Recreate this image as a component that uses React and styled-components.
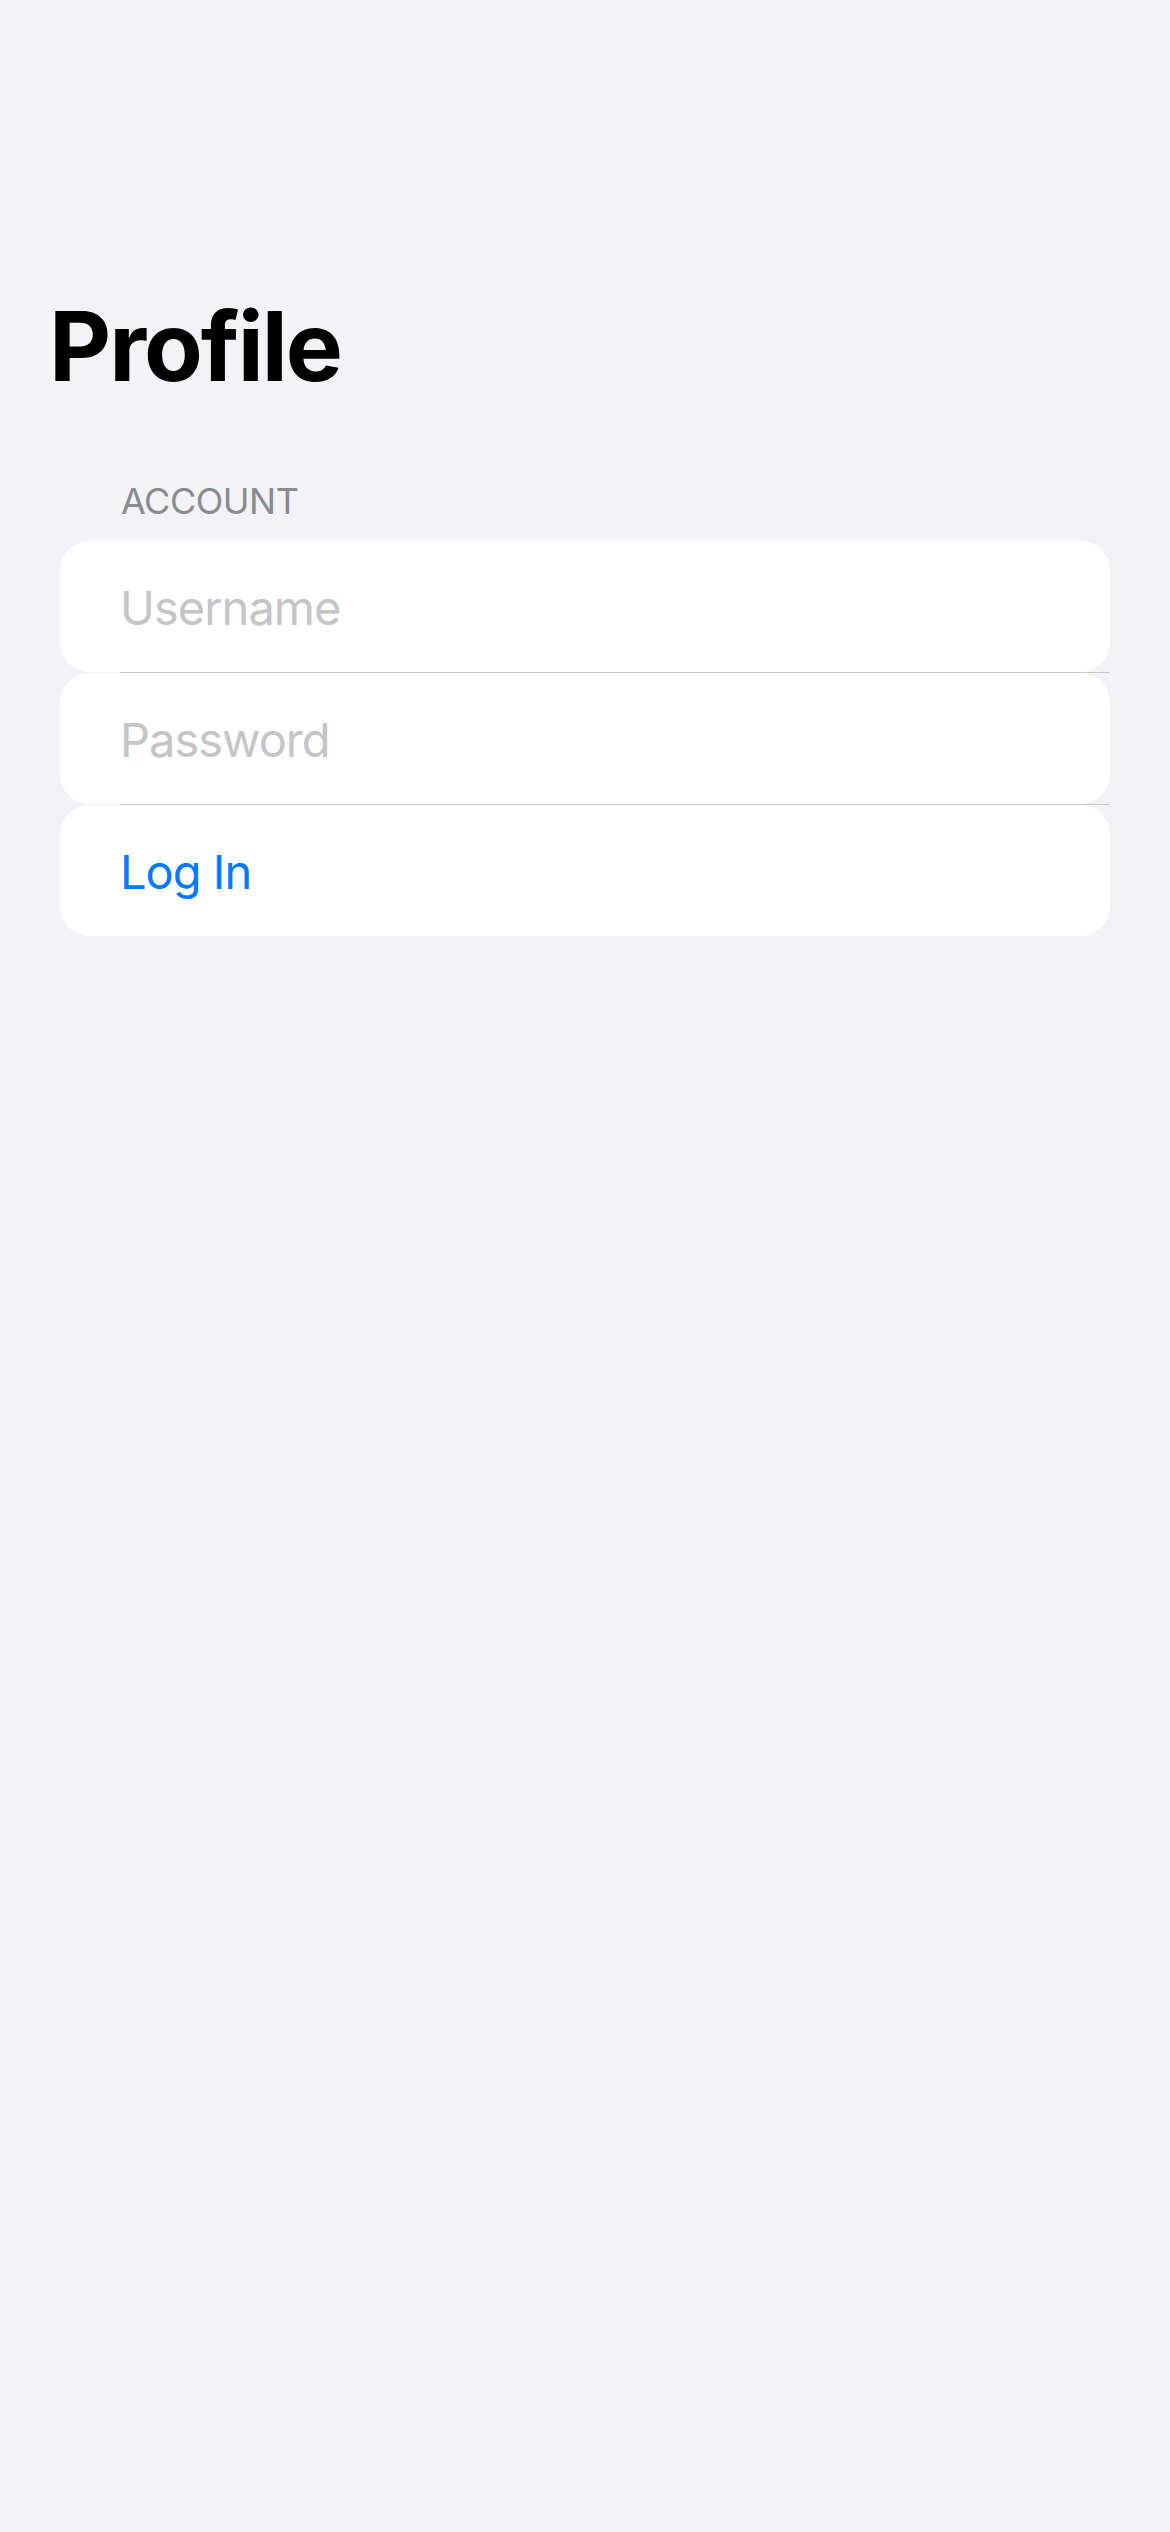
import React, { useState } from "react";
import styled, { createGlobalStyle } from "styled-components";

const GlobalStyle = createGlobalStyle`
  html, body {
    margin: 0;
    padding: 0;
    background: #f2f2f7;
  }
  * {
    box-sizing: border-box;
  }
`;

const Screen = styled.div`
  min-height: 2532px;
  width: 1170px;
  background: #f2f2f7;
  font-family: Inter, "Liberation Sans", sans-serif;
  padding-top: 288px;
`;

const Title = styled.h1`
  margin: 0 0 75px 49px;
  font-size: 96px;
  line-height: 116px;
  font-weight: 700;
  letter-spacing: -2px;
  color: #000;
`;

const SectionHeader = styled.div`
  margin: 0 0 18px 121px;
  font-size: 36px;
  line-height: 44px;
  letter-spacing: -0.5px;
  color: #8a8a8e;
  text-transform: uppercase;
`;

const Group = styled.div`
  margin: 0 60px;
  display: flex;
  flex-direction: column;
`;

const Row = styled.div`
  height: 131px;
  background: #fff;
  border-radius: 30px;
  display: flex;
  align-items: center;
  padding: 2px 60px 0;
`;

const Separator = styled.div`
  height: 1px;
  margin-left: 60px;
  background: #c6c6c8;
`;

const Field = styled.input`
  flex: 1;
  border: none;
  outline: none;
  background: transparent;
  padding: 0;
  font-family: inherit;
  font-size: 47px;
  line-height: 57px;
  letter-spacing: -1px;
  color: #000;

  &::placeholder {
    color: #c5c5c7;
  }
`;

const LoginButton = styled.button`
  border: none;
  background: transparent;
  padding: 0;
  font-family: inherit;
  font-size: 47px;
  line-height: 57px;
  letter-spacing: -1px;
  color: #007aff;
  cursor: pointer;
`;

const App = () => {
  const [username, setUsername] = useState("");
  const [password, setPassword] = useState("");

  return (
    <Screen>
      <GlobalStyle />
      <Title>Profile</Title>
      <SectionHeader>Account</SectionHeader>
      <Group>
        <Row>
          <Field
            placeholder="Username"
            value={username}
            onChange={(e) => setUsername(e.target.value)}
          />
        </Row>
        <Separator />
        <Row>
          <Field
            type="password"
            placeholder="Password"
            value={password}
            onChange={(e) => setPassword(e.target.value)}
          />
        </Row>
        <Separator />
        <Row>
          <LoginButton type="button">Log In</LoginButton>
        </Row>
      </Group>
    </Screen>
  );
};

export default App;
